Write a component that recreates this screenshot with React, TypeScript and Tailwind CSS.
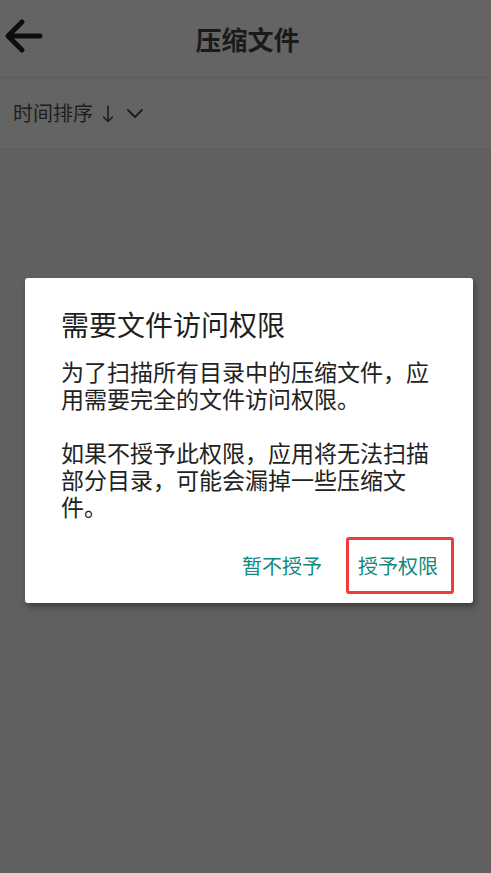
import React from "react";

const font = { fontFamily: '"Noto Sans CJK SC", "Noto Sans", sans-serif' };

export default function App() {
  return (
    <div className="w-[491px] h-[873px] bg-[#606060] flex flex-col relative overflow-hidden" style={font}>
      <div className="h-[77px] bg-[#646464] relative flex items-center justify-center shrink-0">
        <svg className="absolute left-0 top-[14px]" width="48" height="46" viewBox="0 0 48 46">
          <path d="M40 22 H10 M22 8 L8 22 L22 36" fill="none" stroke="#0d0d0d" strokeWidth="5" strokeLinecap="round" strokeLinejoin="round" />
        </svg>
        <span className="text-[26px] font-bold text-[#1a1a1a] leading-none mt-[1px] ml-[4px]">压缩文件</span>
      </div>
      <div className="h-[1px] bg-[#5c5c5c] shrink-0" />
      <div className="h-[70px] bg-[#646464] flex items-center pl-[13px] shrink-0 text-[#1e1e1e]">
        <span className="text-[20px] leading-none">时间排序</span>
        <svg className="ml-[9px] mt-[2px]" width="12" height="18" viewBox="0 0 12 18">
          <path d="M6 1 V16.5 M1.5 12 L6 16.5 L10.5 12" fill="none" stroke="#1e1e1e" strokeWidth="1.6" strokeLinecap="round" strokeLinejoin="round" />
        </svg>
        <svg className="ml-[12px] mt-[1px]" width="18" height="11" viewBox="0 0 18 11">
          <path d="M2 2 L9 9 L16 2" fill="none" stroke="#1e1e1e" strokeWidth="2" strokeLinecap="round" strokeLinejoin="round" />
        </svg>
      </div>
      <div className="h-[1px] bg-[#5c5c5c] shrink-0" />

      <div className="absolute left-[25px] top-[278px] w-[448px] h-[325px] bg-white rounded-[3px] shadow-[2px_4px_6px_rgba(0,0,0,0.35)] flex flex-col">
        <div className="pl-[36px] pr-[36px] pt-[28px]">
          <div className="text-[28px] leading-[36px] text-[#1f1f1f]">需要文件访问权限</div>
          <div className="mt-[16px] text-[23px] leading-[27px] text-[#222222]">
            为了扫描所有目录中的压缩文件，应<br />
            用需要完全的文件访问权限。<br />
            <br />
            如果不授予此权限，应用将无法扫描<br />
            部分目录，可能会漏掉一些压缩文<br />
            件。
          </div>
        </div>
        <div className="flex-1" />
        <div className="flex items-center justify-end pr-[19px] pb-[9px]">
          <span className="text-[20px] leading-none text-[#0f8a7c] mr-[24px]">暂不授予</span>
          <div className="w-[108px] h-[57px] border-[3px] border-[#f03c3c] rounded-[3px] flex items-center pl-[9px]">
            <span className="text-[20px] leading-none text-[#0f8a7c]">授予权限</span>
          </div>
        </div>
      </div>
    </div>
  );
}
